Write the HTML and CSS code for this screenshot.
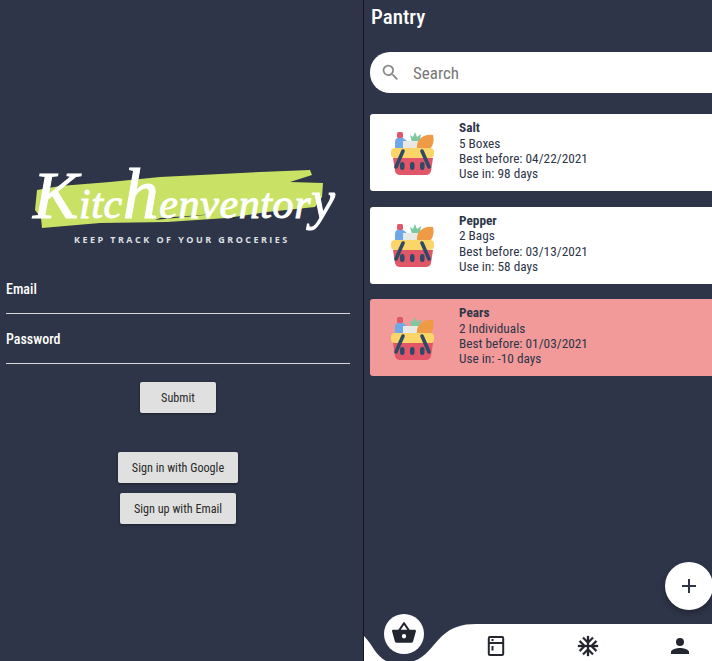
FILE: index.html
```html
<!DOCTYPE html>
<html lang="en">
<head>
    <meta charset="UTF-8">
    <meta name="viewport" content="width=device-width, initial-scale=1.0">
    <title>Kitchenventory</title>
    <link rel="stylesheet" href="styles.css">
</head>
<body>

<svg class="defs" width="0" height="0">
  <symbol id="basket" viewBox="0 0 44 44">
    <path d="M7 7h6q4 2 5 6v6H5v-8q0-3 2-4z" fill="#6fa8e8"/>
    <rect x="7" y="1" width="6" height="6" rx="1.500" fill="#e0566a"/>
    <path d="M22 11l-2-7 3 2 2-5 2 5 4-3-1 6 3-1-5 6z" fill="#7cc8a0"/>
    <rect x="13" y="10" width="15" height="9" fill="#e8e8e4"/>
    <path d="M27 18q-1-9 7-13 5-2 9-1 2 8-3 14z" fill="#ef9a45"/>
    <rect x="1" y="17" width="43" height="10" rx="4" fill="#fbd568"/>
    <path d="M3 27h40l-2 13q-1 4-5 4H10q-4 0-5-4z" fill="#e2566a"/>
    <rect x="10" y="31" width="4.500" height="8" rx="2.200" fill="#2f4a66"/>
    <rect x="20" y="31" width="4.500" height="8" rx="2.200" fill="#2f4a66"/>
    <rect x="30" y="31" width="4.500" height="8" rx="2.200" fill="#2f4a66"/>
    <path d="M6 36l7-16M39 36l-7-16" stroke="#2f4a66" stroke-width="3.600" stroke-linecap="round" fill="none"/>
  </symbol>
</svg>

<main class="screens">

  <section class="login">
    <svg class="logo" viewBox="0 0 363 110" width="363" height="110">
      <path class="logo-brush" d="M37 50 L60 46 L110 42 L160 37 L260 32 L310 30 L312 35 L290 42 L323 43 L322 57 L315 67 L267 72 L227 78 L167 82 L100 83 L42 88 L41 78 L35 70z"/>
      <path class="logo-streak" d="M155 80 L215 74 L160 78z"/>
      <text class="logo-name" x="33" y="78"><tspan class="logo-big">K</tspan>itc<tspan class="logo-tall">h</tspan>enventor<tspan class="logo-end">y</tspan></text>
      <text class="logo-tag" x="74" y="103">KEEP TRACK OF YOUR GROCERIES</text>
    </svg>

    <form class="login-form">
      <label class="field">Email</label>
      <label class="field field-pw">Password</label>
      <button class="btn btn-submit" type="button">Submit</button>
      <button class="btn btn-google" type="button">Sign in with Google</button>
      <button class="btn btn-email" type="button">Sign up with Email</button>
    </form>
  </section>

  <section class="pantry">
    <h1>Pantry</h1>

    <div class="search">
      <svg width="21" height="21" viewBox="0 0 24 24"><path fill="#8a8a8a" d="M15.5 14h-.79l-.28-.27A6.47 6.47 0 0 0 16 9.5 6.5 6.5 0 1 0 9.5 16c1.61 0 3.09-.59 4.23-1.57l.27.28v.79l5 4.99L20.49 19l-4.99-5zm-6 0C7.01 14 5 11.99 5 9.5S7.01 5 9.5 5 14 7.01 14 9.5 11.99 14 9.5 14z"/></svg>
      <span>Search</span>
    </div>

    <div class="items">
      <div class="item">
        <svg class="item-pic"><use href="#basket"/></svg>
        <div class="item-text">
          <b>Salt</b>
          <span>5 Boxes</span>
          <span>Best before: 04/22/2021</span>
          <span>Use in: 98 days</span>
        </div>
      </div>
      <div class="item">
        <svg class="item-pic"><use href="#basket"/></svg>
        <div class="item-text">
          <b>Pepper</b>
          <span>2 Bags</span>
          <span>Best before: 03/13/2021</span>
          <span>Use in: 58 days</span>
        </div>
      </div>
      <div class="item expired">
        <svg class="item-pic"><use href="#basket"/></svg>
        <div class="item-text">
          <b>Pears</b>
          <span>2 Individuals</span>
          <span>Best before: 01/03/2021</span>
          <span>Use in: -10 days</span>
        </div>
      </div>
    </div>

    <button class="fab" type="button">
      <svg width="24" height="24" viewBox="0 0 24 24"><path fill="#2d3446" d="M19 13h-6v6h-2v-6H5v-2h6V5h2v6h6z"/></svg>
    </button>

    <nav class="tabs">
      <svg class="tabs-bg" width="348" height="37" viewBox="0 0 348 37"><path fill="#fff" d="M0 12 C8 20 12 32 22 37 L0 37z M50 37 C62 33 68 22 78 12 C88 3 98 0 112 0 L348 0 L348 37z"/></svg>
      <div class="tab tab-active">
        <svg width="26" height="26" viewBox="0 0 24 24"><path fill="#23262e" d="M17.21 9l-4.38-6.56a1 1 0 0 0-1.66 0L6.79 9H2a1 1 0 0 0-1 1.27l2.54 9.27A2 2 0 0 0 5.5 21h13a2 2 0 0 0 1.93-1.46L23 10.27 23 10a1 1 0 0 0-1-1h-4.79zM9 9l3-4.4L15 9H9zm3 8a2 2 0 1 1 0-4 2 2 0 0 1 0 4z"/></svg>
      </div>
      <div class="tab">
        <svg width="24" height="24" viewBox="0 0 24 24"><path fill="#23262e" d="M18 2H6a2.200 2.200 0 0 0-2.200 2.200v15.600A2.200 2.200 0 0 0 6 22h12a2.200 2.200 0 0 0 2.200-2.200V4.200A2.200 2.200 0 0 0 18 2zm.2 17.800a.2.2 0 0 1-.2.2H6a.2.2 0 0 1-.2-.2V10h12.400zm0-11.800H5.800V4.200a.2.2 0 0 1 .2-.2h12a.2.2 0 0 1 .2.2zM7.500 5h2v2h-2zm0 7h2v4.500h-2z"/></svg>
      </div>
      <div class="tab">
        <svg class="flake" width="24" height="24" viewBox="0 0 24 24"><path fill="#23262e" d="M22 11h-4.170l3.240-3.240-1.410-1.420L15 11h-2V9l4.660-4.660-1.420-1.410L13 6.170V2h-2v4.170L7.760 2.930 6.340 4.340 11 9v2H9L4.340 6.340 2.930 7.760 6.170 11H2v2h4.170l-3.240 3.240 1.410 1.420L9 13h2v2l-4.660 4.660 1.420 1.410L11 17.830V22h2v-4.170l3.240 3.240 1.420-1.410L13 15v-2h2l4.660 4.660 1.410-1.420L17.830 13H22z"/></svg>
      </div>
      <div class="tab">
        <svg width="24" height="24" viewBox="0 0 24 24"><path fill="#23262e" d="M12 12a4 4 0 1 0 0-8 4 4 0 0 0 0 8zm0 2c-2.670 0-9 1.340-9 4v2h18v-2c0-2.660-6.330-4-9-4z"/></svg>
      </div>
    </nav>
  </section>

</main>

</body>
</html>
```

FILE: styles.css
```css
* {
    box-sizing: border-box;
}
body {
    margin: 0;
    background-color: #2e3548;
    font-family: Roboto, "Liberation Sans", sans-serif;
    font-stretch: 75%;
    font-size: 14px;
    color: #2e3548;
}
.defs {
    display: block;
    height: 0;
}
.screens {
    display: flex;
    width: 712px;
    height: 661px;
    overflow: hidden;
}

/* login side */
.login {
    width: 364px;
    flex-shrink: 0;
    border-right: 1px solid #14171f;
    padding-top: 140px;
}
.logo {
    display: block;
}
.logo-brush {
    fill: #c9e265;
}
.logo-streak {
    fill: #2e3548;
}
.logo-name {
    fill: #fff;
    stroke: #fff;
    stroke-width: 1px;
    font-family: "Liberation Serif", serif;
    font-style: italic;
    font-stretch: normal;
    font-size: 42px;
    letter-spacing: 0.600px;
}
.logo-big {
    font-size: 68px;
}
.logo-tall {
    font-size: 72px;
}
.logo-end {
    font-size: 54px;
}
.logo-tag {
    fill: #dfe1e6;
    font-family: "Open Sans", sans-serif;
    font-stretch: normal;
    font-weight: 700;
    font-size: 9px;
    letter-spacing: 2.450px;
}
.login-form {
    display: flex;
    flex-direction: column;
    align-items: center;
    padding: 30px 7px 0 0;
}
.field {
    align-self: flex-start;
    width: 344px;
    height: 34px;
    margin-left: 6px;
    border-bottom: 1px solid #d8d8d8;
    color: #fff;
    font-weight: 500;
    font-size: 14px;
    line-height: 18px;
}
.field-pw {
    height: 34px;
    margin-top: 16px;
}
.btn {
    height: 31px;
    padding: 0;
    border: 0;
    border-radius: 2px;
    background-color: #e0e0e0;
    color: #2a2a2a;
    font-family: inherit;
    font-stretch: inherit;
    font-size: 12.200px;
    white-space: nowrap;
    box-shadow: 0 1px 3px rgba(0, 0, 0, 0.4);
}
.btn-submit {
    width: 76px;
    margin-top: 18px;
}
.btn-google {
    width: 120px;
    margin-top: 39px;
}
.btn-email {
    width: 116px;
    margin-top: 10px;
}

/* pantry side */
.pantry {
    position: relative;
    flex: 1;
    min-width: 0;
    padding-left: 6px;
}
.pantry h1 {
    margin: 4px 0 0 1px;
    height: 48px;
    color: #fff;
    font-size: 21px;
    font-weight: 500;
    line-height: 26px;
}
.search {
    display: flex;
    align-items: center;
    gap: 12px;
    width: 360px;
    height: 41px;
    padding-left: 10px;
    border-radius: 20px;
    background-color: #fff;
    color: #777;
    font-size: 17px;
}
.items {
    display: flex;
    flex-direction: column;
    gap: 15.500px;
    width: 360px;
    margin-top: 21px;
}
.item {
    display: flex;
    align-items: center;
    height: 77px;
    padding-left: 20px;
    border-radius: 3px;
    background-color: #fff;
}
.item.expired {
    background-color: #f29a9a;
}
.item-pic {
    width: 44px;
    height: 44px;
    flex-shrink: 0;
}
.item-text {
    display: flex;
    flex-direction: column;
    margin: -3px 0 0 25px;
    line-height: 15.300px;
    font-size: 13.300px;
}
.fab {
    position: absolute;
    top: 562px;
    right: -1px;
    display: flex;
    align-items: center;
    justify-content: center;
    width: 48px;
    height: 48px;
    padding: 0;
    border: 0;
    border-radius: 50%;
    background-color: #fff;
    box-shadow: 0 3px 6px rgba(0, 0, 0, 0.3);
}
.tabs {
    position: absolute;
    left: 0;
    right: 0;
    bottom: 0;
    display: flex;
    align-items: center;
    justify-content: space-between;
    height: 37px;
    padding: 6px 20px 0 28px;
}
.tabs-bg {
    position: absolute;
    left: 0;
    top: 0;
}
.tab {
    position: relative;
    width: 24px;
    height: 24px;
}
.flake {
    stroke: #23262e;
    stroke-width: 0.3px;
}
.tab-active {
    margin-top: -6px;
}
.tab-active::before {
    content: "";
    position: absolute;
    left: -8px;
    top: -17px;
    width: 40px;
    height: 40px;
    border-radius: 50%;
    background-color: #fff;
}
.tab-active svg {
    position: absolute;
    left: -1px;
    top: -11px;
}
```
